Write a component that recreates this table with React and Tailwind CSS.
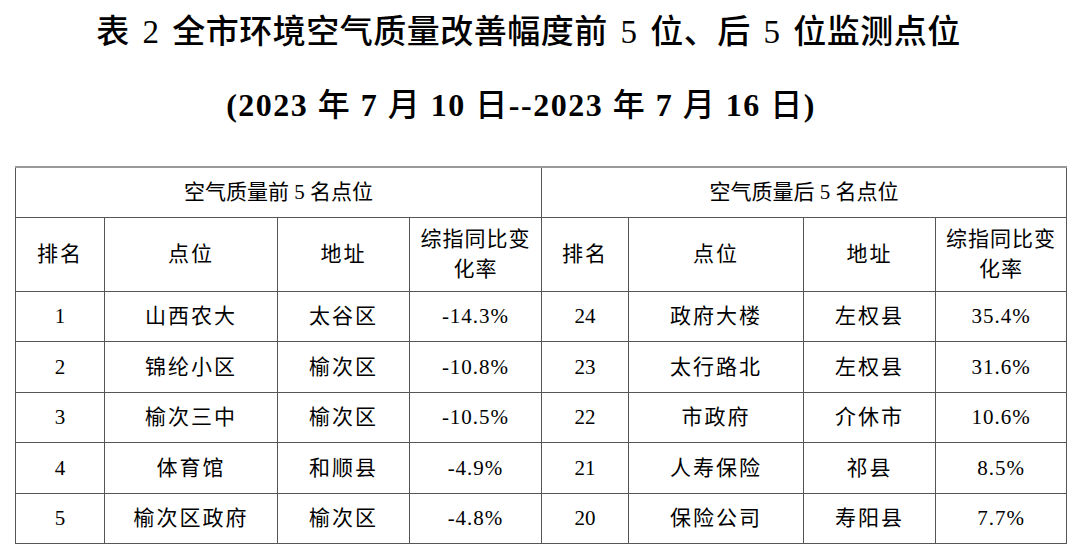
import React from "react";

const CJK = { fontFamily: '"Liberation Serif", "Noto Sans CJK SC", serif' };

const top = [
  ["1", "山西农大", "太谷区", "-14.3%"],
  ["2", "锦纶小区", "榆次区", "-10.8%"],
  ["3", "榆次三中", "榆次区", "-10.5%"],
  ["4", "体育馆", "和顺县", "-4.9%"],
  ["5", "榆次区政府", "榆次区", "-4.8%"],
];
const bottom = [
  ["24", "政府大楼", "左权县", "35.4%"],
  ["23", "太行路北", "左权县", "31.6%"],
  ["22", "市政府", "介休市", "10.6%"],
  ["21", "人寿保险", "祁县", "8.5%"],
  ["20", "保险公司", "寿阳县", "7.7%"],
];

const cell = "border border-[#555] text-center align-middle p-0";
const B = ({ children }) => <span className="font-bold">{children}</span>;

export default function App() {
  return (
    <div className="w-[1080px] h-[552px] bg-white text-black overflow-hidden" style={CJK}>
      <div className="h-[66px] flex items-center justify-center pr-[23px] text-[33px] font-medium [word-spacing:4px] tracking-[0.5px]">
        表 2 全市环境空气质量改善幅度前 5 位、后 5 位监测点位
      </div>
      <div className="h-[78px] flex items-center justify-center pr-[38px] text-[32px] font-medium tracking-[1.5px]">
        <span>
          <B>(2023</B> 年 <B>7</B> 月 <B>10</B> 日<B>--2023</B> 年 <B>7</B> 月 <B>16</B> 日<B>)</B>
        </span>
      </div>
      <table className="mt-[22px] ml-[15px] w-[1051px] table-fixed border-collapse text-[21px] leading-[30px]">
        <colgroup>
          <col className="w-[89px]" />
          <col className="w-[173px]" />
          <col className="w-[132px]" />
          <col className="w-[132px]" />
          <col className="w-[87px]" />
          <col className="w-[175px]" />
          <col className="w-[132px]" />
          <col className="w-[131px]" />
        </colgroup>
        <tbody>
          <tr className="h-[50px]">
            <td colSpan={4} className={`${cell} border-t-2 border-t-[#999]`}>空气质量前 5 名点位</td>
            <td colSpan={4} className={`${cell} border-t-2 border-t-[#999]`}>空气质量后 5 名点位</td>
          </tr>
          <tr className="h-[74px]">
            <td className={`${cell} tracking-[2px]`}>排名</td>
            <td className={`${cell} tracking-[2px]`}>点位</td>
            <td className={`${cell} tracking-[2px]`}>地址</td>
            <td className={`${cell} tracking-[1px]`}>综指同比变<br />化率</td>
            <td className={`${cell} tracking-[2px]`}>排名</td>
            <td className={`${cell} tracking-[2px]`}>点位</td>
            <td className={`${cell} tracking-[2px]`}>地址</td>
            <td className={`${cell} tracking-[1px]`}>综指同比变<br />化率</td>
          </tr>
          {top.map((r, i) => {
            const b = bottom[i];
            return (
              <tr key={i} className="h-[50.5px]">
                <td className={cell}>{r[0]}</td>
                <td className={`${cell} tracking-[2px]`}>{r[1]}</td>
                <td className={`${cell} tracking-[2px]`}>{r[2]}</td>
                <td className={`${cell} tracking-[1px]`}>{r[3]}</td>
                <td className={cell}>{b[0]}</td>
                <td className={`${cell} tracking-[2px]`}>{b[1]}</td>
                <td className={`${cell} tracking-[2px]`}>{b[2]}</td>
                <td className={`${cell} tracking-[1px]`}>{b[3]}</td>
              </tr>
            );
          })}
        </tbody>
      </table>
    </div>
  );
}
